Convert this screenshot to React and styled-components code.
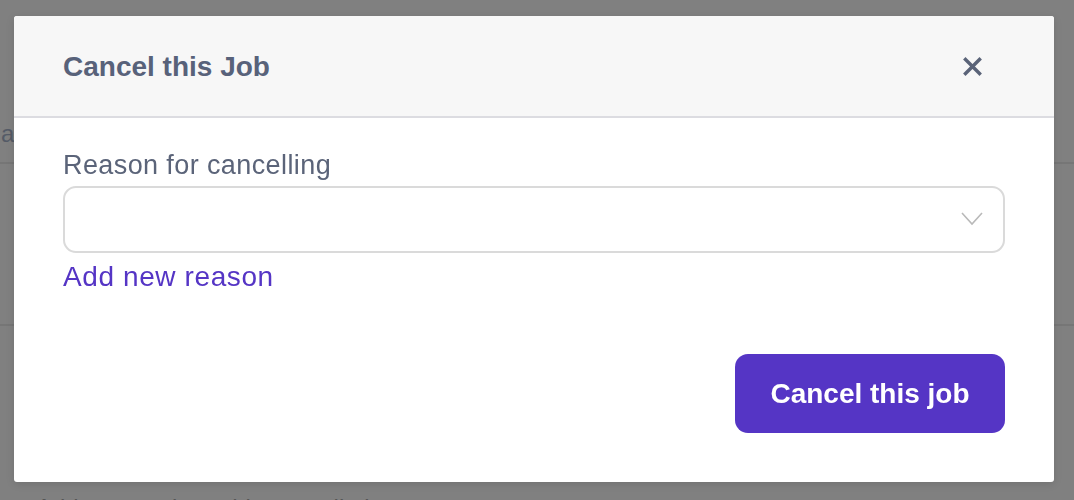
import React, { useState } from 'react';
import styled, { createGlobalStyle } from 'styled-components';

const GlobalStyle = createGlobalStyle`
  html, body {
    margin: 0;
    padding: 0;
    height: 100%;
    overflow: hidden;
  }
  body {
    background-color: #808080;
    font-family: "Liberation Sans", Arial, sans-serif;
  }
`;

const reasons = ['Customer request', 'Duplicate job', 'Scheduling conflict'];

const App = () => {
  const [reason, setReason] = useState('');

  return (
    <>
      <GlobalStyle />
      <StPage>
        <StPageTitle>at details</StPageTitle>
        <StPageDivider />
        <StPageSection />
        <StPageDivider />
        <StPageFooter>Add a note about this cancellation</StPageFooter>
      </StPage>

      <StModal role="dialog" aria-labelledby="cancel-title">
        <StHeader>
          <StTitle id="cancel-title">Cancel this Job</StTitle>
          <StClose type="button" aria-label="Close">
            <svg width="19" height="19" viewBox="0 0 19 19">
              <path
                d="M2.5 2.5 L16.5 16.5 M16.5 2.5 L2.5 16.5"
                stroke="#5a6378"
                strokeWidth="3.4"
                strokeLinecap="square"
              />
            </svg>
          </StClose>
        </StHeader>

        <StBody>
          <StLabel htmlFor="reason">Reason for cancelling</StLabel>
          <StSelectWrap>
            <StSelect
              id="reason"
              value={reason}
              onChange={(e) => setReason(e.target.value)}
            >
              <option value="" />
              {reasons.map((r) => (
                <option key={r} value={r}>
                  {r}
                </option>
              ))}
            </StSelect>
            <StChevron width="22" height="14" viewBox="0 0 22 14">
              <path d="M1 1 L11 12 L21 1" fill="none" stroke="#b9b9b9" strokeWidth="1.6" />
            </StChevron>
          </StSelectWrap>
          <StLink href="#">Add new reason</StLink>

          <StFooter>
            <StButton type="button">Cancel this job</StButton>
          </StFooter>
        </StBody>
      </StModal>
    </>
  );
};

export default App;

const StPage = styled.div`
  display: flex;
  flex-direction: column;
  padding-top: 120px;
`;

const StPageTitle = styled.div`
  font-size: 24px;
  color: #555b67;
  padding-left: 1px;
  height: 42px;
  white-space: nowrap;
`;

const StPageDivider = styled.div`
  height: 2px;
  background-color: #767676;
`;

const StPageSection = styled.div`
  height: 160px;
`;

const StPageFooter = styled.div`
  margin-top: 168px;
  padding-left: 36px;
  font-size: 24px;
  color: #565656;
  white-space: nowrap;
`;

const StModal = styled.div`
  position: fixed;
  top: 16px;
  left: 14px;
  width: 1040px;
  background-color: #ffffff;
  border-radius: 3px;
  overflow: hidden;
  box-shadow: 0 2px 8px rgba(0, 0, 0, 0.12);
`;

const StHeader = styled.div`
  display: flex;
  align-items: center;
  justify-content: space-between;
  height: 100px;
  padding: 0 72px 0 49px;
  background-color: #f7f7f7;
  border-bottom: 2px solid #dcdce1;
`;

const StTitle = styled.h2`
  margin: 2px 0 0;
  font-size: 28px;
  font-weight: bold;
  color: #58627a;
`;

const StClose = styled.button`
  display: flex;
  border: none;
  background: none;
  padding: 0;
  cursor: pointer;
`;

const StBody = styled.div`
  display: flex;
  flex-direction: column;
  padding: 29px 49px 49px;
`;

const StLabel = styled.label`
  font-size: 27px;
  letter-spacing: 0.4px;
  color: #5b6479;
  line-height: 36px;
  margin-bottom: 3px;
`;

const StSelectWrap = styled.div`
  position: relative;
  display: flex;
`;

const StSelect = styled.select`
  appearance: none;
  width: 100%;
  height: 67px;
  border: 2px solid #dadada;
  border-radius: 13px;
  background-color: #ffffff;
  padding: 0 60px 0 20px;
  font-family: inherit;
  font-size: 24px;
  color: #58627a;
  outline: none;
`;

const StChevron = styled.svg`
  position: absolute;
  right: 22px;
  top: 26px;
  pointer-events: none;
`;

const StLink = styled.a`
  margin-top: 7px;
  font-size: 28px;
  letter-spacing: 0.6px;
  line-height: 34px;
  color: #5535c5;
  text-decoration: none;
  align-self: flex-start;
`;

const StFooter = styled.div`
  display: flex;
  justify-content: flex-end;
  margin-top: 60px;
`;

const StButton = styled.button`
  border: none;
  background-color: #5535c5;
  color: #ffffff;
  width: 270px;
  height: 79px;
  border-radius: 13px;
  font-family: inherit;
  font-size: 28px;
  font-weight: bold;
  cursor: pointer;
`;
